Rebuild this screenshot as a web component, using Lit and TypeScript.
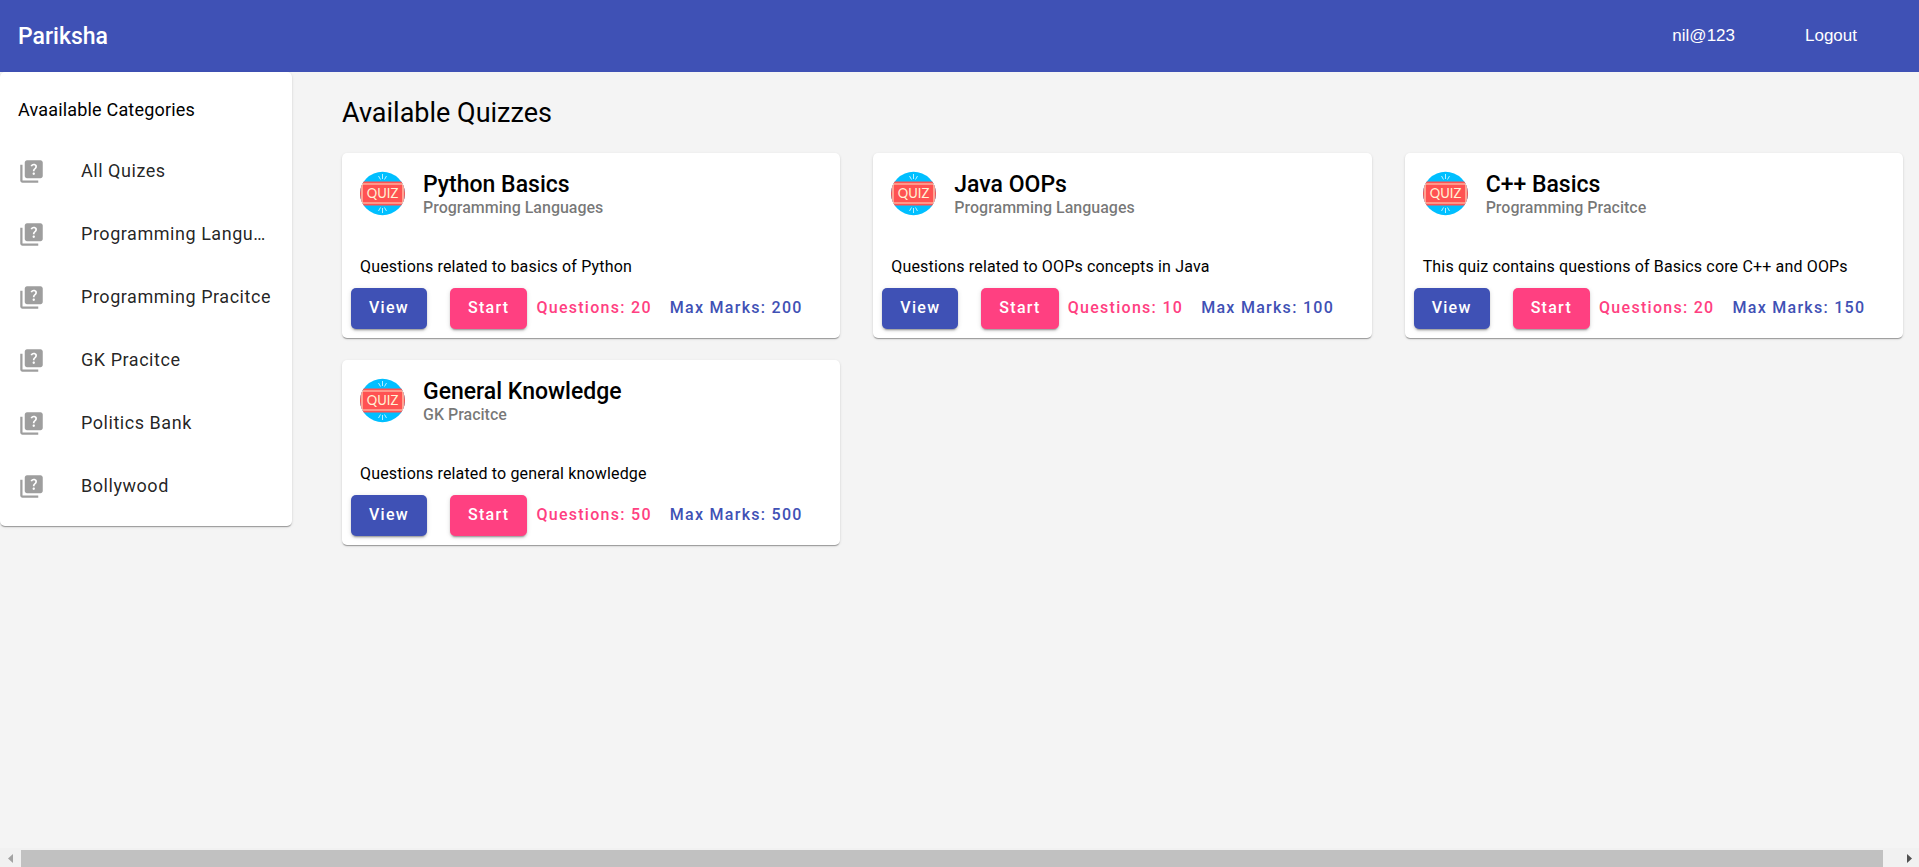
import { LitElement, html, css, svg } from "lit";
import { customElement, property } from "lit/decorators.js";

interface Quiz {
  title: string;
  category: string;
  description: string;
  questions: number;
  marks: number;
}

const CATEGORIES = [
  "All Quizes",
  "Programming Languages",
  "Programming Pracitce",
  "GK Pracitce",
  "Politics Bank",
  "Bollywood",
];

const QUIZZES: Quiz[] = [
  { title: "Python Basics", category: "Programming Languages", description: "Questions related to basics of Python", questions: 20, marks: 200 },
  { title: "Java OOPs", category: "Programming Languages", description: "Questions related to OOPs concepts in Java", questions: 10, marks: 100 },
  { title: "C++ Basics", category: "Programming Pracitce", description: "This quiz contains questions of Basics core C++ and OOPs", questions: 20, marks: 150 },
  { title: "General Knowledge", category: "GK Pracitce", description: "Questions related to general knowledge", questions: 50, marks: 500 },
];

const rays = svg`<path d="M22.5 3v5M18.5 5l2 3.500M26.500 5l-2 3.500M22.500 42v-5M18.500 40l2-3.500M26.500 40l-2-3.500" stroke="#b8f0ff" stroke-width="1" fill="none"/>`;

@customElement("quiz-card")
export class QuizCard extends LitElement {
  @property({ attribute: false }) quiz!: Quiz;

  static styles = css`
    :host {
      display: block;
      background: #fff;
      border-radius: 5px;
      box-shadow: 0 2px 1px -1px rgba(0, 0, 0, 0.2), 0 1px 1px rgba(0, 0, 0, 0.14), 0 1px 3px rgba(0, 0, 0, 0.12);
    }
    .header {
      display: flex;
      gap: 18px;
      padding: 18px 18px 0;
    }
    .avatar {
      flex: none;
      width: 45px;
      height: 45px;
    }
    .word {
      font: 13px Lato, sans-serif;
      fill: #fff3d6;
    }
    .title {
      margin: 0;
      font-size: 23px;
      font-weight: 500;
      line-height: 27px;
    }
    .subtitle {
      margin: 0;
      font-size: 16px;
      font-weight: 500;
      line-height: 20px;
      color: rgba(0, 0, 0, 0.54);
    }
    .description {
      margin: 0;
      padding: 39px 18px 11px;
      font-size: 16px;
      line-height: 20px;
      letter-spacing: 0.01em;
    }
    .actions {
      display: flex;
      flex-wrap: wrap;
      padding: 0 9px 9px;
    }
    button {
      height: 41px;
      padding: 0 9px 2px;
      border: 0;
      border-radius: 5px;
      background: none;
      font: 500 16px Roboto, sans-serif;
      letter-spacing: 0.08em;
      white-space: nowrap;
      cursor: pointer;
    }
    .raised {
      padding: 0 18px 2px;
      color: #fff;
      box-shadow: 0 3px 1px -2px rgba(0, 0, 0, 0.2), 0 2px 2px rgba(0, 0, 0, 0.14), 0 1px 5px rgba(0, 0, 0, 0.12);
    }
    .view {
      margin-right: 23px;
      background: #3f51b5;
    }
    .start {
      background: #ff4081;
    }
    .questions {
      color: #ff4081;
    }
    .marks {
      color: #3f51b5;
    }
  `;

  render() {
    const q = this.quiz;
    return html`
      <div class="header">
        <svg class="avatar" viewBox="0 0 45 45" aria-hidden="true">
          <defs><clipPath id="disc"><ellipse cx="22.5" cy="22.5" rx="22.5" ry="21.7" /></clipPath></defs>
          <g clip-path="url(#disc)">
            <rect width="45" height="45" fill="#00bfff" />
            ${rays}
            <rect y="10.500" width="45" height="24" fill="#ff5252" />
            <rect x="2" y="13" width="41" height="19" rx="1" fill="none" stroke="#ffdcc0" stroke-width="1.200" />
          </g>
          <text class="word" x="22.500" y="27" text-anchor="middle">QUIZ</text>
        </svg>
        <div>
          <h2 class="title">${q.title}</h2>
          <p class="subtitle">${q.category}</p>
        </div>
      </div>
      <p class="description">${q.description}</p>
      <div class="actions">
        <button class="raised view">View</button>
        <button class="raised start">Start</button>
        <button class="questions">Questions: ${q.questions}</button>
        <button class="marks">Max Marks: ${q.marks}</button>
      </div>
    `;
  }
}

@customElement("app-root")
export class AppRoot extends LitElement {
  static styles = css`
    :host {
      display: flex;
      flex-direction: column;
      min-height: 100vh;
      background: #f4f4f4;
      color: #000;
      font-family: Roboto, sans-serif;
    }
    .toolbar {
      display: flex;
      align-items: center;
      gap: 34px;
      height: 72px;
      padding: 0 44px 0 18px;
      background: #3f51b5;
      color: #fff;
    }
    .brand {
      margin: 0 auto 0 0;
      font-size: 23px;
      font-weight: 500;
    }
    .nav {
      padding: 8px 18px;
      border: 0;
      background: none;
      color: inherit;
      font: 17px "Liberation Sans", Arial, sans-serif;
      cursor: pointer;
    }
    .body {
      display: flex;
      align-items: flex-start;
      flex: 1;
    }
    .sidebar {
      flex: none;
      box-sizing: border-box;
      width: 292px;
      padding: 22px 0 8px;
      background: #fff;
      border-radius: 5px;
      box-shadow: 0 2px 1px -1px rgba(0, 0, 0, 0.2), 0 1px 1px rgba(0, 0, 0, 0.14), 0 1px 3px rgba(0, 0, 0, 0.12);
    }
    .sidebar-title {
      margin: 0 0 14px;
      padding: 0 18px;
      font-size: 18px;
      font-weight: 400;
      line-height: 32px;
      letter-spacing: 0.01em;
    }
    .category {
      display: flex;
      align-items: center;
      gap: 36px;
      height: 63px;
      padding: 0 18px;
      color: rgba(0, 0, 0, 0.87);
      font-size: 18px;
      letter-spacing: 0.03em;
      text-decoration: none;
    }
    .icon {
      flex: none;
      width: 27px;
      height: 27px;
      fill: #9e9e9e;
    }
    .label {
      overflow: hidden;
      padding-bottom: 2px;
      text-overflow: ellipsis;
      white-space: nowrap;
      line-height: 28px;
    }
    .main {
      flex: 1;
      min-width: 0;
      padding: 23px 16px 22px 50px;
    }
    .heading {
      margin: 0 0 22px;
      font-size: 27px;
      font-weight: 400;
      line-height: 36px;
    }
    .grid {
      display: grid;
      grid-template-columns: repeat(3, 1fr);
      gap: 22px 33px;
    }
    .scrollbar {
      display: flex;
      align-items: center;
      height: 17px;
      padding-top: 2px;
      background: #f1f1f1;
    }
    .arrow {
      flex: none;
      width: 21px;
      height: 17px;
      fill: #a3a3a3;
    }
    .arrow.next {
      fill: #505050;
    }
    .track {
      flex: 1;
      align-self: stretch;
      padding-right: 15px;
    }
    .thumb {
      height: 100%;
      background: #c1c1c1;
    }
  `;

  render() {
    return html`
      <header class="toolbar">
        <h1 class="brand">Pariksha</h1>
        <button class="nav">nil@123</button>
        <button class="nav">Logout</button>
      </header>
      <div class="body">
        <nav class="sidebar">
          <h3 class="sidebar-title">Avaailable Categories</h3>
          ${CATEGORIES.map(
            (name) => html`
              <a class="category" href="#">
                <svg class="icon" viewBox="0 0 24 24" aria-hidden="true">
                  <path d="M4 6H2v14c0 1.100.9 2 2 2h14v-2H4V6z" />
                  <path d="M20 2H8c-1.100 0-2 .9-2 2v12c0 1.100.9 2 2 2h12c1.100 0 2-.9 2-2V4c0-1.100-.9-2-2-2zm-5.990 13c-.59 0-1.050-.47-1.050-1.050 0-.59.47-1.040 1.050-1.040.59 0 1.040.45 1.040 1.040-.01.58-.45 1.050-1.040 1.050zm2.500-6.170c-.63.93-1.230 1.210-1.560 1.810-.13.24-.18.4-.18 1.180h-1.520c0-.41-.06-1.080.26-1.650.41-.73 1.180-1.160 1.630-1.800.48-.68.21-1.940-1.140-1.940-.88 0-1.320.67-1.500 1.230l-1.370-.57C11.510 5.960 12.520 5 13.990 5c1.230 0 2.080.56 2.510 1.260.37.61.58 1.730.01 2.570z" />
                </svg>
                <span class="label">${name}</span>
              </a>
            `
          )}
        </nav>
        <main class="main">
          <h1 class="heading">Available Quizzes</h1>
          <div class="grid">
            ${QUIZZES.map((quiz) => html`<quiz-card .quiz=${quiz}></quiz-card>`)}
          </div>
        </main>
      </div>
      <div class="scrollbar" aria-hidden="true">
        <svg class="arrow" viewBox="0 0 21 17"><path d="M13 4v9L8 8.500z" /></svg>
        <div class="track"><div class="thumb"></div></div>
        <svg class="arrow next" viewBox="0 0 21 17"><path d="M9 4v9l5-4.500z" /></svg>
      </div>
    `;
  }
}
